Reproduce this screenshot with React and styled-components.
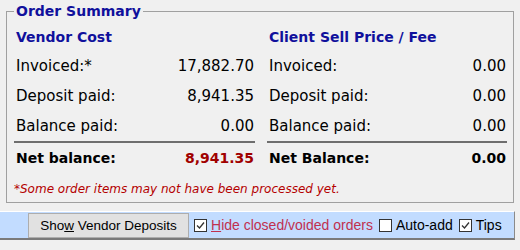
import styled, { createGlobalStyle } from "styled-components";

const Global = createGlobalStyle`
  body {
    margin: 0;
    background: #f0f0f0;
    font-family: "DejaVu Sans", sans-serif;
  }
`;

const Page = styled.div`
  width: 520px;
  height: 250px;
  background: #f0f0f0;
  padding-top: 3px;
  box-sizing: border-box;
`;

const Group = styled.fieldset`
  margin: 0 0 0 6px;
  width: 508px;
  height: 200px;
  box-sizing: border-box;
  border: 1px solid #a0a0a0;
  padding: 0 6px 0 7px;
`;

const Legend = styled.legend`
  padding: 0 2px;
  margin-left: 0;
  font-size: 14px;
  font-weight: bold;
  color: #10109c;
`;

const Columns = styled.div`
  display: grid;
  grid-template-columns: 241px 240px;
  column-gap: 12px;
  margin-top: 4px;
`;

const Column = styled.div`
  display: flex;
  flex-direction: column;
`;

const Heading = styled.div`
  font-size: 14px;
  font-weight: bold;
  color: #10109c;
  height: 28px;
  line-height: 28px;
  padding-left: 2px;
`;

const Row = styled.div`
  display: flex;
  justify-content: space-between;
  align-items: center;
  height: 30px;
  font-size: ${(p) => (p.$bold ? "14px" : "15px")};
  color: #000;
  padding: 0 1px 0 2px;
  border-bottom: ${(p) => (p.$rule ? "2px solid #6e6e6e" : "none")};
  font-weight: ${(p) => (p.$bold ? "bold" : "normal")};
`;

const Value = styled.span`
  color: ${(p) => p.$color || "#000"};
`;

const Note = styled.div`
  font-size: 12px;
  font-style: italic;
  color: #b40000;
  padding: 9px 0 0 0;
`;

const Bar = styled.div`
  margin-top: 8px;
  width: 515px;
  height: 29px;
  box-sizing: border-box;
  background: #c2dcff;
  border-top: 1px solid #ffffff;
  border-right: 1px solid #8a8a8a;
  border-bottom: 2px solid #7a7a7a;
  display: flex;
  align-items: center;
  padding-left: 28px;
  white-space: nowrap;
`;

const Button = styled.button`
  width: 161px;
  height: 25px;
  background: #e1e1e1;
  border: 1px solid #adadad;
  font-family: "Liberation Sans", sans-serif;
  font-size: 13.5px;
  color: #000;
  padding: 0;
  margin-right: 5px;
  flex-shrink: 0;
`;

const Check = styled.label`
  display: flex;
  align-items: center;
  gap: 4px;
  margin-right: 6px;
  font-family: "Liberation Sans", sans-serif;
  font-size: 14px;
  color: ${(p) => p.$color || "#000"};
`;

const Box = styled.span`
  width: 11px;
  height: 11px;
  border: 1px solid #333;
  background: #fff;
  display: flex;
  align-items: center;
  justify-content: center;
  flex-shrink: 0;
`;

const Tick = () => (
  <svg width="9" height="9" viewBox="0 0 9 9">
    <path d="M1 4.5 L3.5 7 L8 1.5" fill="none" stroke="#333" strokeWidth="1.3" />
  </svg>
);

const Cb = ({ checked, color, children }) => (
  <Check $color={color}>
    <Box>{checked && <Tick />}</Box>
    <span>{children}</span>
  </Check>
);

const App = () => {
  return (
    <Page>
      <Global />
      <Group>
        <Legend>Order Summary</Legend>
        <Columns>
          <Column>
            <Heading>Vendor Cost</Heading>
            <Row>
              <span>Invoiced:*</span>
              <Value>17,882.70</Value>
            </Row>
            <Row>
              <span>Deposit paid:</span>
              <Value>8,941.35</Value>
            </Row>
            <Row $rule>
              <span>Balance paid:</span>
              <Value>0.00</Value>
            </Row>
            <Row $bold>
              <span>Net balance:</span>
              <Value $color="#a00000">8,941.35</Value>
            </Row>
          </Column>
          <Column>
            <Heading>Client Sell Price / Fee</Heading>
            <Row>
              <span>Invoiced:</span>
              <Value>0.00</Value>
            </Row>
            <Row>
              <span>Deposit paid:</span>
              <Value>0.00</Value>
            </Row>
            <Row $rule>
              <span>Balance paid:</span>
              <Value>0.00</Value>
            </Row>
            <Row $bold>
              <span>Net Balance:</span>
              <Value>0.00</Value>
            </Row>
          </Column>
        </Columns>
        <Note>*Some order items may not have been processed yet.</Note>
      </Group>
      <Bar>
        <Button>
          Sho<u>w</u> Vendor Deposits
        </Button>
        <Cb checked color="#c0304f">
          <u>H</u>ide closed/voided orders
        </Cb>
        <Cb>Auto-add</Cb>
        <Cb checked>Tips</Cb>
      </Bar>
    </Page>
  );
};

export default App;
